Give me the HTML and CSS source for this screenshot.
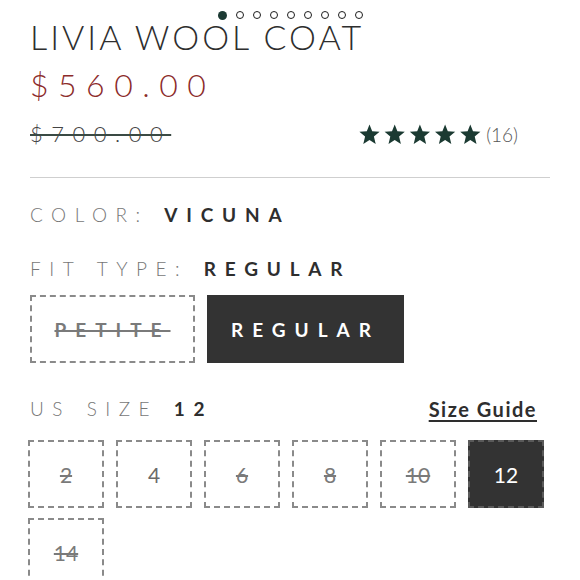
FILE: index.html
```html
<!DOCTYPE html>
<html lang="en">
<head>
<meta charset="utf-8">
<title>Livia Wool Coat</title>
<link rel="stylesheet" href="styles.css">
</head>
<body>
<div class="page">
  <div class="dots">
    <span class="dot active"></span><span class="dot"></span><span class="dot"></span><span class="dot"></span><span class="dot"></span><span class="dot"></span><span class="dot"></span><span class="dot"></span><span class="dot"></span>
  </div>
  <h1 class="title">LIVIA WOOL COAT</h1>
  <div class="price">$560.00</div>
  <div class="price-row">
    <div class="old-price">$700.00</div>
    <div class="rating">
      <svg class="stars" width="122" height="21" viewBox="0 0 122 21">
        <defs>
          <path id="star" d="M10.5 0.5 L13.2 7.3 L20.6 7.8 L14.9 12.6 L16.7 19.9 L10.5 15.9 L4.3 19.9 L6.1 12.6 L0.4 7.8 L7.8 7.3 Z"/>
        </defs>
        <use href="#star" x="0"/>
        <use href="#star" x="25.2"/>
        <use href="#star" x="50.4"/>
        <use href="#star" x="75.6"/>
        <use href="#star" x="100.8"/>
      </svg>
      <span class="count">(16)</span>
    </div>
  </div>
  <hr class="divider">
  <div class="label color-label">COLOR: <b>VICUNA</b></div>
  <div class="label fit-label">FIT TYPE: <b>REGULAR</b></div>
  <div class="fit-options">
    <div class="fit-btn petite"><s>PETITE</s></div>
    <div class="fit-btn regular">REGULAR</div>
  </div>
  <div class="size-head">
    <div class="label">US SIZE <b>12</b></div>
    <a class="size-guide" href="#">Size Guide</a>
  </div>
  <div class="sizes">
    <div class="size off"><s>2</s></div>
    <div class="size">4</div>
    <div class="size off"><s>6</s></div>
    <div class="size off"><s>8</s></div>
    <div class="size off"><s>10</s></div>
    <div class="size selected">12</div>
    <div class="size off"><s>14</s></div>
  </div>
</div>
</body>
</html>
```

FILE: styles.css
```css
html, body {
  margin: 0;
  padding: 0;
  background: #fff;
}

body {
  font-family: "Lato", "Liberation Sans", sans-serif;
  color: #333;
}

.page {
  width: 580px;
  box-sizing: border-box;
  padding: 11px 30px 0 30px;
}

.dots {
  display: flex;
  justify-content: center;
  align-items: center;
  gap: 9px;
  height: 8px;
}

.dot {
  width: 8px;
  height: 8px;
  box-sizing: border-box;
  border: 1.6px solid #1d1d1d;
  border-radius: 50%;
}

.dot.active {
  width: 9px;
  height: 9px;
  border: none;
  background: #1c3a33;
}

.title {
  margin: 0;
  font-size: 34px;
  line-height: 36px;
  font-weight: 300;
  letter-spacing: 3px;
  color: #2e2e2e;
}

.price {
  margin-top: 12px;
  font-size: 32px;
  line-height: 36px;
  font-weight: 300;
  letter-spacing: 9.5px;
  color: #8c2b2b;
}

.price-row {
  margin-top: 18px;
  display: flex;
  justify-content: space-between;
  align-items: center;
  padding-right: 32px;
}

.old-price {
  font-size: 22px;
  line-height: 26px;
  font-weight: 300;
  letter-spacing: 8.5px;
  color: #444;
  text-decoration: line-through;
  text-decoration-color: #3a4a44;
  text-decoration-thickness: 2px;
}

.rating {
  display: flex;
  align-items: center;
  gap: 5px;
}

.stars {
  display: block;
  fill: #1b3a32;
}

.count {
  font-size: 19px;
  font-weight: 300;
  color: #555;
}

.divider {
  margin: 30px 0 0 0;
  border: none;
  height: 1px;
  background: #cfcfcf;
}

.label {
  font-size: 19px;
  line-height: 24px;
  font-weight: 300;
  letter-spacing: 8.5px;
  word-spacing: 2px;
  color: #777;
}

.label b {
  font-weight: 700;
  color: #2e2e2e;
  letter-spacing: 8.8px;
}

.color-label {
  margin-top: 25px;
}

.fit-label {
  margin-top: 30px;
}

.fit-options {
  margin-top: 14px;
  display: flex;
  gap: 12px;
}

.fit-btn {
  height: 68px;
  box-sizing: border-box;
  display: flex;
  align-items: center;
  justify-content: center;
  font-size: 19px;
  font-weight: 700;
  letter-spacing: 9px;
}

.fit-btn.petite {
  width: 165px;
  border: 2px dashed #8a8a8a;
  color: #7a7a7a;
}

.fit-btn.petite s {
  text-decoration-thickness: 2px;
}

.fit-btn.regular {
  width: 197px;
  background: #333;
  color: #fff;
}

.size-head {
  margin-top: 34px;
  display: flex;
  justify-content: space-between;
  align-items: center;
  padding-right: 13px;
}

.size-guide {
  font-size: 20px;
  line-height: 24px;
  font-weight: 700;
  letter-spacing: 1.5px;
  color: #2e2e2e;
  text-decoration: underline;
  text-decoration-thickness: 2px;
  text-underline-offset: 3px;
}

.sizes {
  margin-top: 19px;
  display: grid;
  grid-template-columns: repeat(6, 76px);
  column-gap: 12px;
  row-gap: 10px;
  margin-left: -2px;
}

.size {
  height: 68px;
  box-sizing: border-box;
  border: 2px dashed #8a8a8a;
  display: flex;
  align-items: center;
  justify-content: center;
  font-size: 21px;
  color: #6a6a6a;
}

.size.off {
  color: #7a7a7a;
}

.size s {
  text-decoration-thickness: 2px;
}

.size.selected {
  background: #333;
  border-color: #5a5a5a;
  color: #fff;
}
```
